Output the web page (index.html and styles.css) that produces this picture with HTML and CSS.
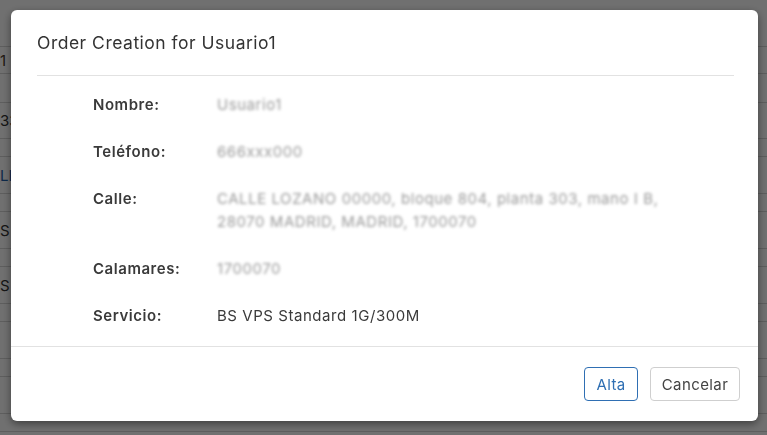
FILE: index.html
```html
<!DOCTYPE html>
<html lang="es">
<head>
<meta charset="utf-8">
<title>Order Creation</title>
<link rel="stylesheet" href="styles.css">
</head>
<body>
<div class="page">
  <div class="bg-row h46"></div>
  <div class="bg-row h27"><span class="bg-cell warm">1</span></div>
  <div class="bg-row h29"></div>
  <div class="bg-row h36"><span class="bg-cell">33</span></div>
  <div class="bg-row h18"></div>
  <div class="bg-row h37"><span class="bg-cell link">LI</span></div>
  <div class="bg-row h18"></div>
  <div class="bg-row h37"><span class="bg-cell">S</span></div>
  <div class="bg-row h18"></div>
  <div class="bg-row h37"><span class="bg-cell">S s</span></div>
  <div class="bg-row h18"></div>
  <div class="bg-row h37"></div>
  <div class="bg-row h18"></div>
  <div class="bg-row h37"></div>
  <div class="bg-row h18"></div>
</div>

<div class="overlay">
  <div class="dialog">
    <div class="dialog-header">
      <h2 class="dialog-title">Order Creation for Usuario1</h2>
    </div>
    <div class="dialog-body">
      <div class="field">
        <div class="label">Nombre:</div>
        <div class="value"><span class="blur">Usuario1</span></div>
      </div>
      <div class="field">
        <div class="label">Teléfono:</div>
        <div class="value"><span class="blur">666xxx000</span></div>
      </div>
      <div class="field">
        <div class="label">Calle:</div>
        <div class="value"><span class="blur">CALLE LOZANO 00000, bloque 804, planta 303, mano I B,<br>28070 MADRID, MADRID, 1700070</span></div>
      </div>
      <div class="field">
        <div class="label">Calamares:</div>
        <div class="value"><span class="blur">1700070</span></div>
      </div>
      <div class="field">
        <div class="label">Servicio:</div>
        <div class="value">BS VPS Standard 1G/300M</div>
      </div>
    </div>
    <div class="dialog-footer">
      <button class="btn btn-primary" type="button">Alta</button>
      <button class="btn btn-default" type="button">Cancelar</button>
    </div>
  </div>
</div>
</body>
</html>
```

FILE: styles.css
```css
html, body {
  margin: 0;
  padding: 0;
  width: 767px;
  height: 435px;
  overflow: hidden;
  font-family: Inter, "Noto Sans", "Liberation Sans", sans-serif;
  background: #ffffff;
}

.page {
  display: flex;
  flex-direction: column;
  width: 767px;
  height: 435px;
  background: #ffffff;
}

.bg-row {
  display: flex;
  align-items: center;
  border-bottom: 1px solid #d6d6d6;
  box-sizing: border-box;
  flex: none;
}

.h46 { height: 47px; }
.h27 { height: 27px; }
.h29 { height: 29px; }
.h36 { height: 36px; }
.h18 { height: 18px; }
.h37 { height: 37px; }

.bg-cell {
  padding-left: 0;
  white-space: nowrap;
  font-size: 15px;
  color: #333;
}

.bg-cell.link { color: #1f5fa8; }
.bg-cell.warm { color: #4a3a2a; }

.overlay {
  position: fixed;
  inset: 0;
  background: rgba(0, 0, 0, 0.56);
  padding: 10px 0 0 11px;
  box-sizing: border-box;
}

.dialog {
  width: 747px;
  height: 411px;
  background: #ffffff;
  border-radius: 6px;
  box-shadow: 0 3px 9px rgba(0, 0, 0, 0.45);
  display: flex;
  flex-direction: column;
  box-sizing: border-box;
  color: #333;
}

.dialog-header {
  margin: 0 24px 0 26px;
  padding: 21px 0 20px;
  border-bottom: 1px solid #e2e2e2;
}

.dialog-title {
  margin: 0;
  font-size: 17.5px;
  line-height: 24px;
  letter-spacing: 0.5px;
  font-weight: 400;
  color: #333;
}

.dialog-body {
  flex: 1;
  padding: 17px 20px 0 82px;
  display: flex;
  flex-direction: column;
  gap: 24px;
  font-size: 15px;
  line-height: 23px;
  letter-spacing: 0.55px;
}

.field {
  display: flex;
}

.label {
  width: 124px;
  flex: none;
  font-weight: 600;
  color: #3a3a3a;
}

.value {
  color: #3a3a3a;
}

.blur {
  color: #9a9a9a;
  filter: blur(1.4px);
  white-space: nowrap;
}

.dialog-footer {
  height: 75px;
  border-top: 1px solid #e2e2e2;
  display: flex;
  justify-content: flex-end;
  align-items: center;
  gap: 12px;
  padding: 0 18px 0 0;
  box-sizing: border-box;
}

.btn {
  height: 34px;
  font-family: inherit;
  font-size: 15px;
  letter-spacing: 0.4px;
  border-radius: 4px;
  background: #ffffff;
  cursor: pointer;
  padding: 0 8px;
}

.btn-primary {
  border: 1px solid #2f6fb3;
  color: #2f6fb3;
  width: 54px;
}

.btn-default {
  border: 1px solid #cfcfcf;
  color: #444;
  width: 90px;
}
```
